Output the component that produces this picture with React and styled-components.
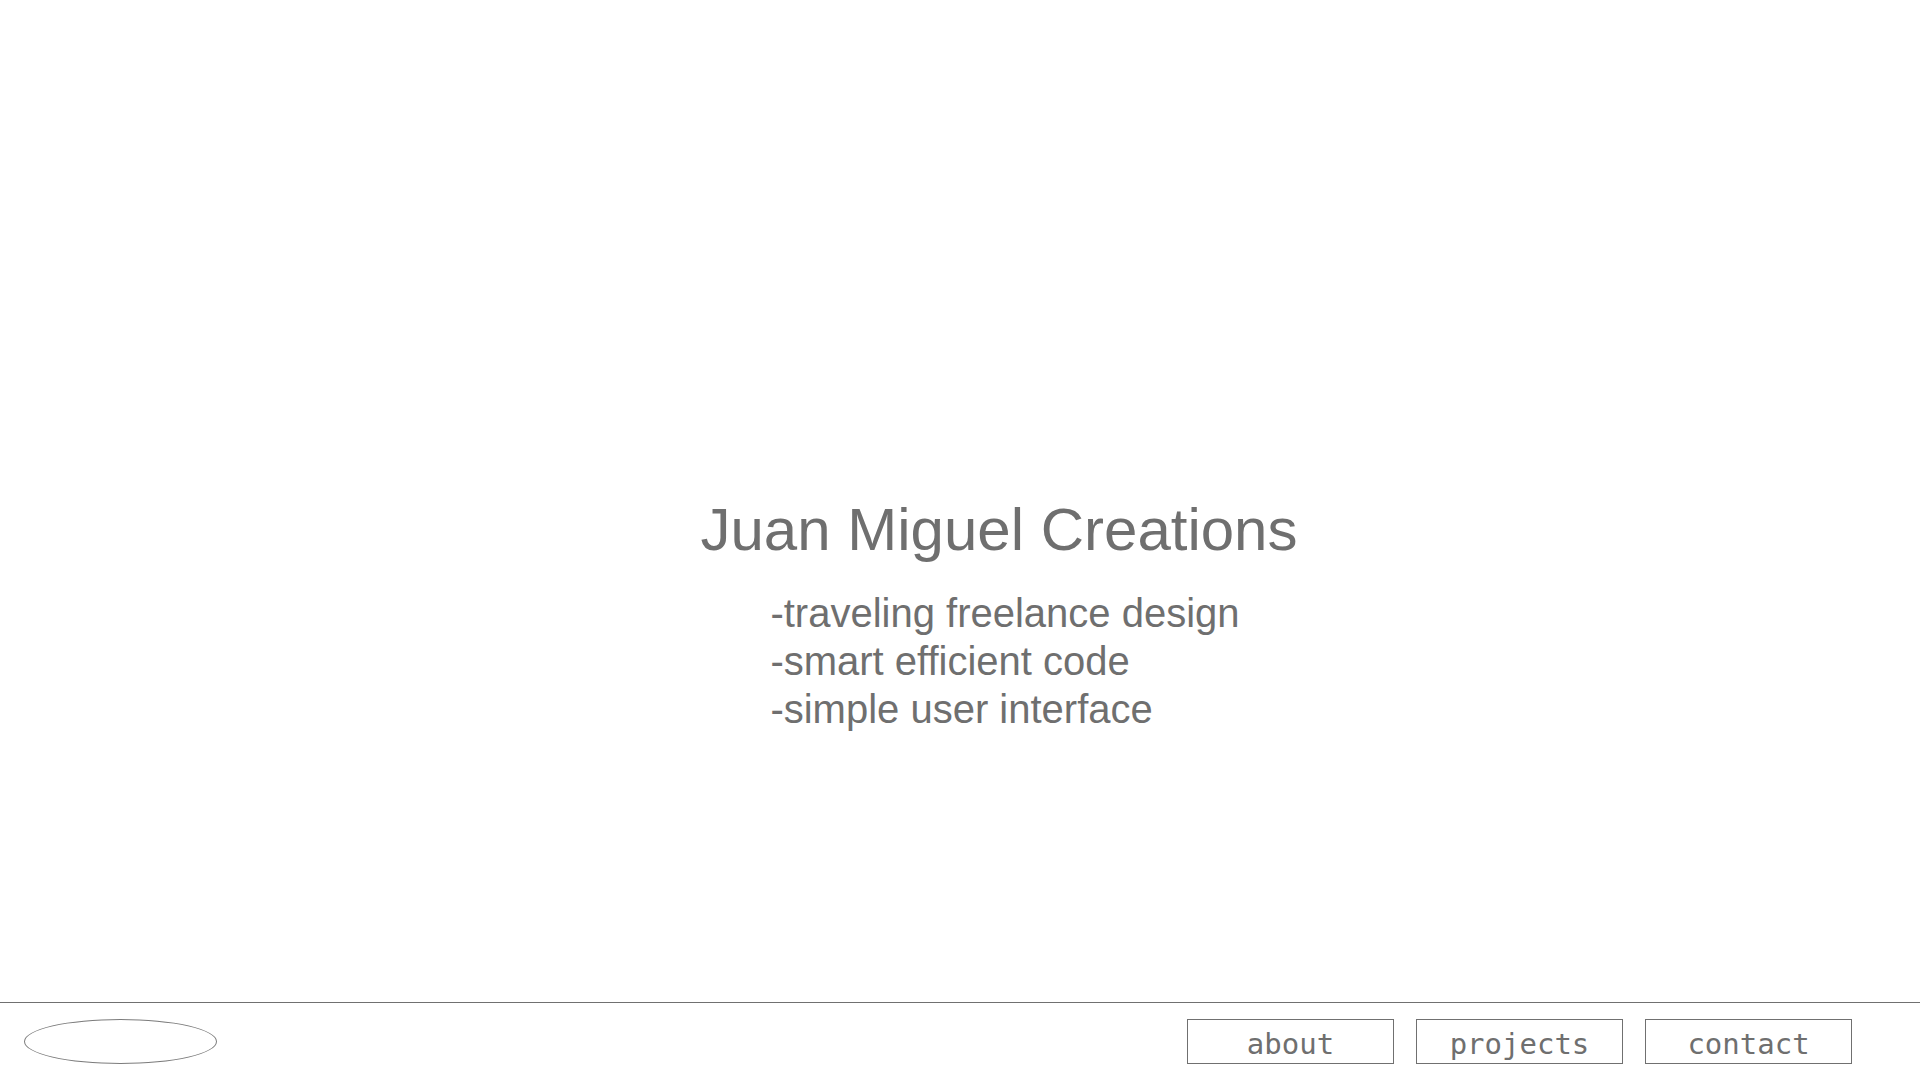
import React from 'react';
import styled, { createGlobalStyle } from 'styled-components';

const GlobalStyle = createGlobalStyle`
  html, body {
    margin: 0;
    padding: 0;
    background: #ffffff;
  }
  body {
    font-family: 'Liberation Sans', Arial, sans-serif;
  }
`;

const Page = styled.div`
  width: 1920px;
  height: 1080px;
  display: flex;
  flex-direction: column;
  overflow: hidden;
`;

const Main = styled.main`
  flex: 1;
  display: flex;
  flex-direction: column;
  align-items: center;
  padding: 495px 0 0 78px;
`;

const Title = styled.h1`
  margin: 0;
  font-size: 60px;
  line-height: 70px;
  font-weight: 400;
  color: #6f6f6f;
`;

const Taglines = styled.ul`
  list-style: none;
  margin: 24px 0 0;
  padding: 0 0 0 12px;
`;

const Tagline = styled.li`
  font-size: 40px;
  line-height: 48px;
  color: #6f6f6f;
`;

const Footer = styled.footer`
  height: 78px;
  border-top: 1px solid #707070;
  display: flex;
  justify-content: space-between;
  align-items: flex-start;
  padding: 16px 68px 0 24px;
  box-sizing: border-box;
`;

const Logo = styled.div`
  width: 193px;
  height: 45px;
  box-sizing: border-box;
  border: 1px solid #7c7c7c;
  border-radius: 50%;
`;

const Nav = styled.nav`
  display: flex;
  gap: 22px;
`;

const NavButton = styled.a`
  width: 207px;
  height: 45px;
  box-sizing: border-box;
  border: 1px solid #707070;
  padding-top: 5px;
  display: flex;
  justify-content: center;
  font-family: 'DejaVu Sans Mono', 'Liberation Mono', monospace;
  font-size: 29px;
  line-height: 39px;
  color: #6f6f6f;
  text-decoration: none;
  cursor: pointer;
`;

const links = ['about', 'projects', 'contact'];

const taglines = [
  '-traveling freelance design',
  '-smart efficient code',
  '-simple user interface'
];

const App = () => {
  return (
    <Page>
      <GlobalStyle />
      <Main>
        <Title>Juan Miguel Creations</Title>
        <Taglines>
          {taglines.map(line => (
            <Tagline key={line}>{line}</Tagline>
          ))}
        </Taglines>
      </Main>
      <Footer>
        <Logo />
        <Nav>
          {links.map(link => (
            <NavButton key={link}>{link}</NavButton>
          ))}
        </Nav>
      </Footer>
    </Page>
  );
};

export default App;
